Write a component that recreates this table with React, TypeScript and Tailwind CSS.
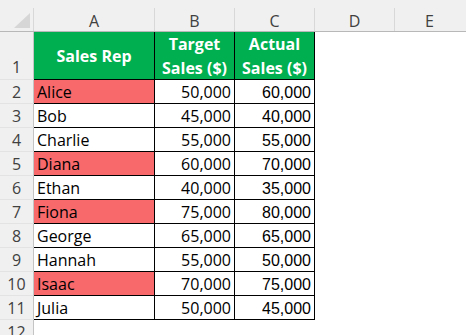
import React from "react";

type Rep = { name: string; target: string; actual: string; flag: boolean };

const reps: Rep[] = [
  { name: "Alice", target: "50,000", actual: "60,000", flag: true },
  { name: "Bob", target: "45,000", actual: "40,000", flag: false },
  { name: "Charlie", target: "55,000", actual: "55,000", flag: false },
  { name: "Diana", target: "60,000", actual: "70,000", flag: true },
  { name: "Ethan", target: "40,000", actual: "35,000", flag: false },
  { name: "Fiona", target: "75,000", actual: "80,000", flag: true },
  { name: "George", target: "65,000", actual: "65,000", flag: false },
  { name: "Hannah", target: "55,000", actual: "50,000", flag: false },
  { name: "Isaac", target: "70,000", actual: "75,000", flag: true },
  { name: "Julia", target: "50,000", actual: "45,000", flag: false },
];

function RowHead({ n, tall }: { n: number; tall?: boolean }) {
  return (
    <div
      className={`w-[34px] shrink-0 bg-[#f0f0f0] border-r border-[#c4c4c4] border-b border-b-[#e3e3e3] flex items-end justify-center text-[16px] text-[#404040] ${
        tall ? "h-[48px] pb-[2px]" : "h-[24px] pb-[1px]"
      }`}
    >
      <span className="leading-[20px]">{n}</span>
    </div>
  );
}

export default function App() {
  return (
    <div className="w-[466px] h-[335px] overflow-hidden bg-white font-['Open_Sans',sans-serif] text-[16px] text-black">
      {/* column letters */}
      <div className="h-[32px] bg-[#f0f0f0] border-b border-[#b8b8b8] flex flex-col">
        <div className="h-[8px]" />
        <div className="flex flex-1 text-[#404040]">
          <div className="w-[34px] shrink-0 border-r border-[#d8d8d8] relative">
            <svg width="34" height="23" className="absolute left-0 top-0">
              <polygon points="14,20 30,20 30,5" fill="#d6d6d6" />
            </svg>
          </div>
          {["A", "B", "C", "D"].map((l, i) => (
            <div
              key={l}
              className={`${i === 0 ? "w-[121px]" : "w-[80px]"} shrink-0 border-r border-[#d8d8d8] flex items-center justify-center leading-none pt-[2px]`}
            >
              {l}
            </div>
          ))}
          <div className="flex-1 flex items-center justify-center leading-none pr-[2px] pt-[2px]">E</div>
        </div>
      </div>

      {/* header row */}
      <div className="flex">
        <RowHead n={1} tall />
        <div className="w-[121px] h-[48px] shrink-0 bg-[#00b050] border-r border-b border-black flex items-center justify-center font-bold text-white">
          Sales Rep
        </div>
        <div className="w-[80px] h-[48px] shrink-0 bg-[#00b050] border-r border-b border-black flex flex-col items-center justify-center font-bold text-white leading-[24px]">
          <span>Target</span>
          <span>Sales ($)</span>
        </div>
        <div className="w-[80px] h-[48px] shrink-0 bg-[#00b050] border-r border-b border-black flex flex-col items-center justify-center font-bold text-white leading-[24px]">
          <span>Actual</span>
          <span>Sales ($)</span>
        </div>
      </div>

      {reps.map((r, i) => (
        <div key={r.name} className="flex">
          <RowHead n={i + 2} />
          <div
            className={`w-[121px] h-[24px] shrink-0 border-r border-b border-black flex items-end pl-[3px] pb-[1px] leading-[20px] ${
              r.flag ? "bg-[#f8696b]" : "bg-white"
            }`}
          >
            {r.name}
          </div>
          <div className="w-[80px] h-[24px] shrink-0 border-r border-b border-black flex items-end justify-end pr-[3px] pb-[1px] leading-[20px]">
            {r.target}
          </div>
          <div className="w-[80px] h-[24px] shrink-0 border-r border-b border-black flex items-end justify-end pr-[3px] leading-[20px] font-['Liberation_Sans',sans-serif] text-[16px]">
            {r.actual}
          </div>
        </div>
      ))}

      <div className="flex">
        <RowHead n={12} />
      </div>
    </div>
  );
}
